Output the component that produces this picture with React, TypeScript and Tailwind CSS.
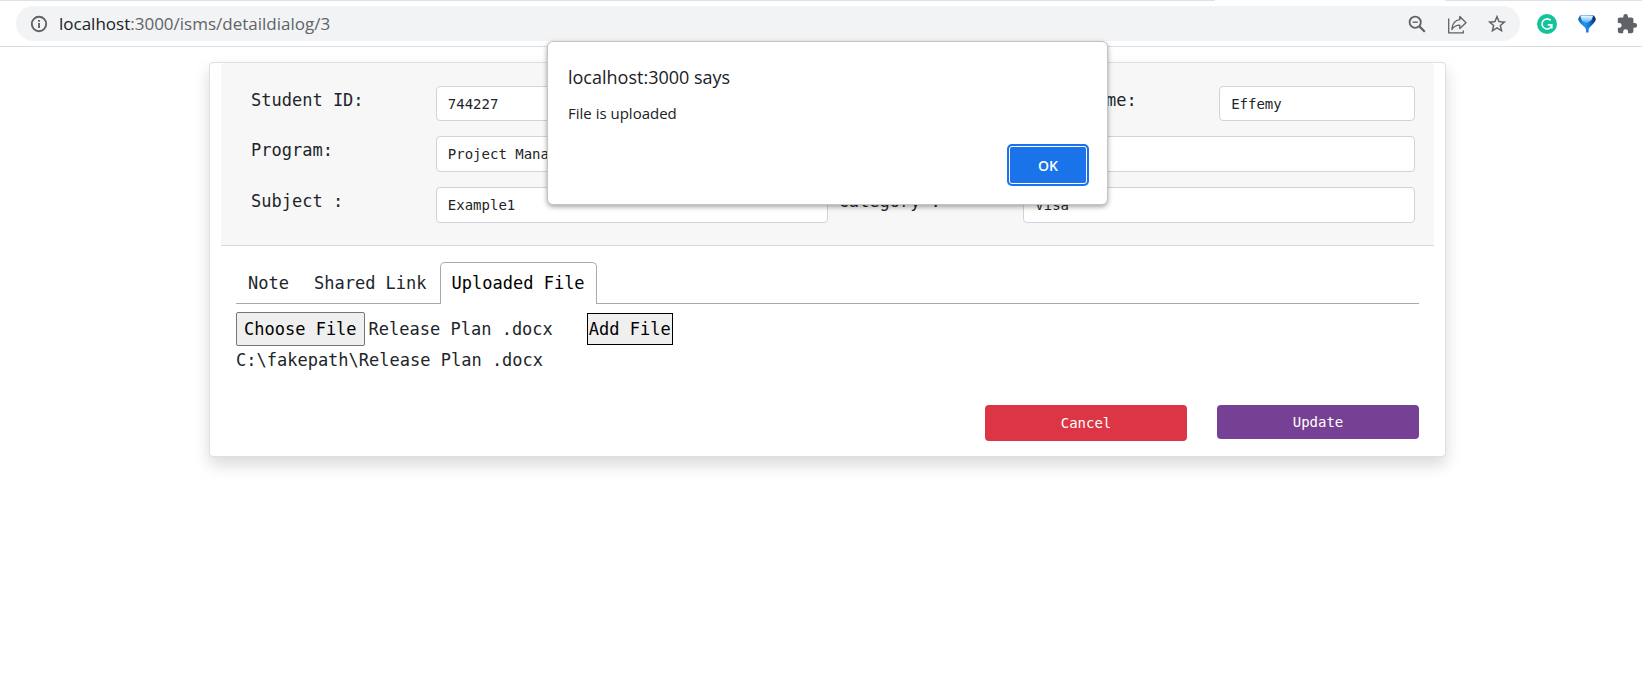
import { useRef, useState } from "react";
import type { ReactNode } from "react";

const UI_FONT = "font-['Open_Sans',sans-serif]";
const MONO_FONT = "font-['DejaVu_Sans_Mono',monospace]";

type FieldProps = { id: string; label?: string; name?: string; value: string; span: string; tall?: boolean };

function Field({ id, label, name, value, span, tall }: FieldProps) {
  return (
    <>
      {label ? (
        <label htmlFor={id} className="col-span-2 whitespace-nowrap pl-[11px] text-[17px] leading-7">
          {label}
        </label>
      ) : (
        <span className="col-span-2" />
      )}
      <input
        id={id}
        aria-label={name}
        defaultValue={value}
        className={`${span} ${tall ? "h-9" : "h-[35px]"} w-full rounded border border-[#ced4da] bg-white px-[11px] text-[14px]`}
      />
    </>
  );
}

function ToolbarButton({ label, children }: { label: string; children: ReactNode }) {
  return (
    <button type="button" aria-label={label} className="flex size-5 items-center justify-center text-[#5f6368]">
      {children}
    </button>
  );
}

function BrowserBar() {
  return (
    <header className={`${UI_FONT} border-b border-[#dadce0] bg-white`}>
      <div className="flex h-px">
        <div className="flex-1 rounded-r bg-[#dee1e6]" />
        <div className="w-[230px]" />
        <div className="w-[197px] bg-[#dee1e6]" />
      </div>
      <div className="flex items-center py-[5px] pl-4 pr-[5px]">
        <div className="flex h-[35px] flex-1 items-center rounded-full bg-[#f1f3f4] pl-[13px] pr-[13px]">
          <svg viewBox="0 0 20 20" className="size-5 shrink-0 text-[#5f6368]" fill="none" stroke="currentColor" strokeWidth="1.9">
            <circle cx="10" cy="10" r="7.2" />
            <path d="M10 9v5M10 6v1.8" />
          </svg>
          <p className="ml-[10px] flex-1 text-[17px] text-[#5f6368]">
            <span className="text-[#202124]">localhost</span>:3000/isms/detaildialog/3
          </p>
          <div className="flex gap-5">
            <ToolbarButton label="Zoom">
              <svg viewBox="0 0 20 20" className="size-5" fill="none" stroke="currentColor" strokeWidth="1.8">
                <circle cx="8.2" cy="8.2" r="5.6" />
                <path d="M12.4 12.4l5.400 5.400" strokeWidth="2.2" />
                <path d="M5.600 8.200h5.200" strokeWidth="1.4" />
              </svg>
            </ToolbarButton>
            <ToolbarButton label="Share">
              <svg viewBox="0 0 20 20" className="size-5" fill="none" stroke="currentColor" strokeWidth="1.3">
                <path d="M1.700 4.500v14.300h14.600v-2.300" />
                <path d="M12.800 2.500l6.200 6.200-6.200 5.800v-3.300c-3.600 0-6 1.400-8 4.300.5-5 3-9.200 8-9.800z" strokeLinejoin="round" />
              </svg>
            </ToolbarButton>
            <ToolbarButton label="Bookmark this page">
              <svg viewBox="0 0 24 24" className="size-[22px] shrink-0" fill="currentColor">
                <path d="M22 9.240l-7.190-.62L12 2 9.190 8.630 2 9.240l5.460 4.730L5.820 21 12 17.270 18.180 21l-1.630-7.030L22 9.240zM12 15.400l-3.760 2.270 1-4.280-3.320-2.880 4.380-.38L12 6.100l1.710 4.040 4.380.38-3.320 2.880 1 4.280L12 15.400z" />
              </svg>
            </ToolbarButton>
          </div>
        </div>
        <div className="ml-[17px] flex gap-5">
          <ToolbarButton label="Grammarly">
            <svg viewBox="0 0 20 20" className="size-5">
              <circle cx="10" cy="10" r="10" fill="#15c39a" />
              <path d="M13.600 6.400A5 5 0 1 0 14.600 12M10.800 10.900h4V14.600" fill="none" stroke="#fff" strokeWidth="1.6" />
            </svg>
          </ToolbarButton>
          <ToolbarButton label="Gem extension">
            <svg viewBox="0 0 20 20" className="size-5">
              <defs>
                <linearGradient id="gem-body" x1="0" x2="1" y1="0" y2="0">
                  <stop offset="0" stopColor="#1459a8" />
                  <stop offset=".35" stopColor="#2196f3" />
                  <stop offset=".65" stopColor="#1472d6" />
                  <stop offset="1" stopColor="#06224f" />
                </linearGradient>
                <linearGradient id="gem-shine" x1="0" x2="0" y1="0" y2="1">
                  <stop offset="0" stopColor="#e6f6ff" />
                  <stop offset="1" stopColor="#4aaef7" />
                </linearGradient>
              </defs>
              <path d="M3 1.500h14l1.800 3.300c0 3.500-4 5.700-7.200 10.200v3.500H9V15C5.500 10.500 1.200 8.300 1.200 4.800z" fill="url(#gem-body)" />
              <path d="M3.500 2h12.500L14.500 6 10 9 5 7z" fill="url(#gem-shine)" />
            </svg>
          </ToolbarButton>
          <ToolbarButton label="Extensions">
            <svg viewBox="0 0 24 24" className="size-[22px] shrink-0" fill="currentColor">
              <path d="M20.500 11H19V7c0-1.100-.9-2-2-2h-4V3.500a2.500 2.500 0 0 0-5 0V5H4c-1.100 0-2 .9-2 2v3.800h1.500a2.700 2.700 0 0 1 0 5.400H2V20c0 1.100.9 2 2 2h3.800v-1.500a2.700 2.700 0 0 1 5.400 0V22H17c1.100 0 2-.9 2-2v-4h1.500a2.500 2.500 0 0 0 0-5z" />
            </svg>
          </ToolbarButton>
        </div>
      </div>
    </header>
  );
}

const TABS = ["Note", "Shared Link", "Uploaded File"];

function UploadedFile() {
  const picker = useRef<HTMLInputElement>(null);
  const [file, setFile] = useState("Release Plan .docx");
  return (
    <div className="pt-2">
      <div className="flex items-center">
        <input
          ref={picker}
          type="file"
          aria-label="File"
          className="hidden"
          onChange={(e) => setFile(e.target.files?.[0]?.name ?? file)}
        />
        <button
          type="button"
          onClick={() => picker.current?.click()}
          className="h-[34px] rounded-xs border border-[#767676] bg-[#efefef] px-[7px] pt-px text-black"
        >
          Choose File
        </button>
        <span className="ml-1 pt-px">{file}</span>
        <button type="button" className="ml-[34px] h-8 border border-black bg-[#efefef] px-px pt-px text-black">
          Add File
        </button>
      </div>
      <p className="leading-7">C:\fakepath\{file}</p>
    </div>
  );
}

export default function App() {
  const [tab, setTab] = useState("Uploaded File");
  const [alertOpen, setAlertOpen] = useState(true);
  return (
    <div className="relative bg-white">
      <BrowserBar />
      <main className={`${MONO_FONT} pb-10 pl-[209px] pr-[196px] pt-[15px] text-[17px] text-[#212529]`}>
        <form className="rounded border border-[#dfdfdf] bg-white px-[11px] shadow-[0_8px_16px_rgba(0,0,0,0.15)]">
          <section className="space-y-[15px] rounded-t border-b border-[#d8d8d8] bg-[#f7f7f7] px-[19px] pb-[22px] pt-[23px]">
            <div className="grid grid-cols-12">
              <Field id="student-id" label="Student ID:" value="744227" span="col-span-2" />
              <Field id="first-name" name="First name" value="" span="col-span-2" />
              <Field id="last-name" label="Last Name:" value="Effemy" span="col-span-2" />
            </div>
            <div className="grid grid-cols-12">
              <Field id="program" label="Program:" value="Project Management" span="col-span-4" tall />
              <Field id="email" name="Email" value="" span="col-span-4" tall />
            </div>
            <div className="grid grid-cols-12">
              <Field id="subject" label="Subject :" value="Example1" span="col-span-4" tall />
              <Field id="category" label="Category :" value="Visa" span="col-span-4" tall />
            </div>
          </section>
          <section className="px-[15px] pb-[15px] pt-4">
            <div role="tablist" className="flex gap-px border-b border-[#aaaaaa]">
              {TABS.map((name) => (
                <button
                  key={name}
                  type="button"
                  role="tab"
                  aria-selected={tab === name}
                  onClick={() => setTab(name)}
                  className={
                    tab === name
                      ? "-mb-px h-[42px] rounded-t-[5px] border border-b-0 border-[#aaaaaa] bg-white px-[11px] pt-px text-black"
                      : "h-[41px] px-3 pt-[3px]"
                  }
                >
                  {name}
                </button>
              ))}
            </div>
            <UploadedFile />
            <div className="mt-[31px] flex items-start justify-end gap-[30px] text-[14px] text-white">
              <button type="button" className="h-9 w-[202px] rounded bg-[#dc3545]">
                Cancel
              </button>
              <button type="button" className="h-[34px] w-[202px] rounded bg-[#764195]">
                Update
              </button>
            </div>
          </section>
        </form>
      </main>
      {alertOpen && (
        <div className="absolute inset-x-0 top-[41px] flex justify-center pl-[209px] pr-[196px]">
          <div
            role="alertdialog"
            aria-labelledby="alert-title"
            aria-describedby="alert-text"
            className={`${UI_FONT} flex w-[561px] flex-col rounded-md border border-[#c4c4c4] bg-white px-5 pb-5 pt-[21px] text-[#202124] shadow-[0_2px_5px_rgba(0,0,0,0.35)]`}
          >
            <h2 id="alert-title" className="text-[18px] leading-7">
              localhost:3000 says
            </h2>
            <p id="alert-text" className="mt-2 text-[15px] leading-7">
              File is uploaded
            </p>
            <button
              type="button"
              onClick={() => setAlertOpen(false)}
              className="mt-[19px] h-[38px] w-[78px] self-end rounded-[3px] border border-white bg-[#1a73e8] text-[14px] font-semibold text-white ring-2 ring-[#1a73e8]"
            >
              OK
            </button>
          </div>
        </div>
      )}
    </div>
  );
}
